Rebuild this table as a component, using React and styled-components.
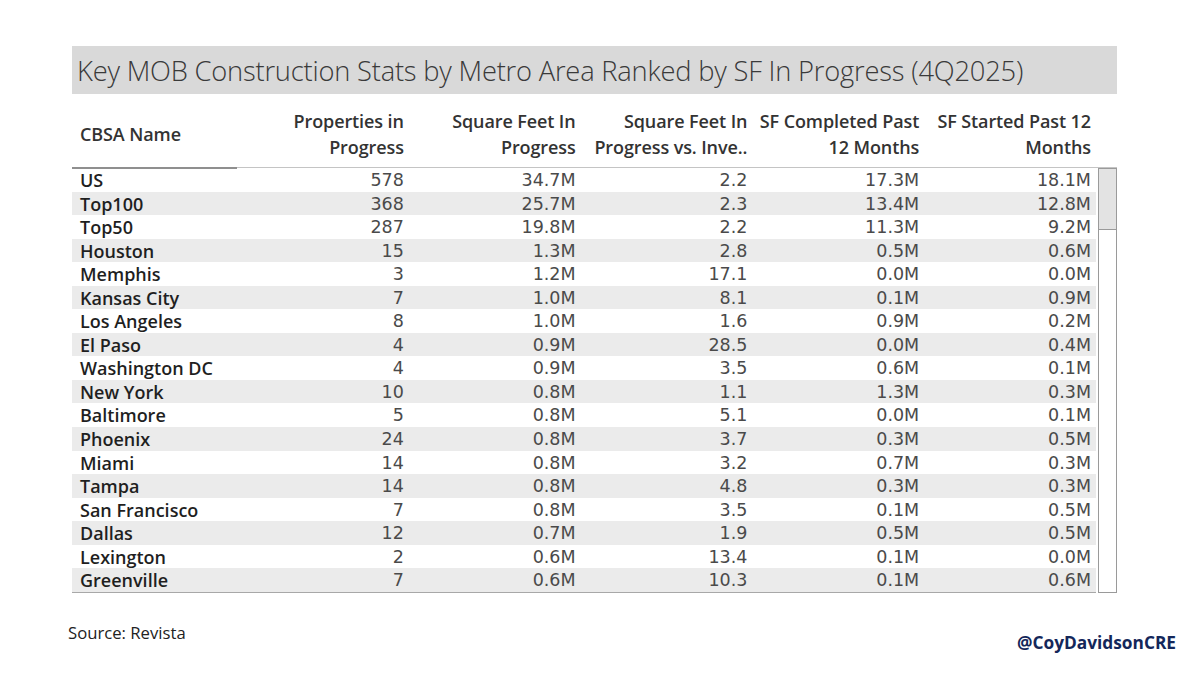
import styled, { createGlobalStyle } from "styled-components";

const GlobalStyle = createGlobalStyle`
  html, body {
    margin: 0;
    padding: 0;
    background: #fff;
  }
  body {
    font-family: "Open Sans", "Noto Sans", sans-serif;
    color: #2b2b2b;
  }
`;

const Page = styled.div`
  width: 1200px;
  height: 675px;
  background: #fff;
  padding: 46px 83px 0 72px;
  box-sizing: border-box;
`;

const TitleBar = styled.div`
  height: 48px;
  background: #d9d9d9;
  display: flex;
  align-items: center;
  padding-left: 5px;
`;

const Title = styled.h1`
  margin: 0;
  font-family: "Open Sans", sans-serif;
  font-weight: 300;
  font-size: 27.3px;
  color: #3a3a3a;
  letter-spacing: -0.2px;
  white-space: nowrap;
`;

const Table = styled.div`
  margin-top: 6px;
  width: 1045px;
`;

const HeadRow = styled.div`
  display: grid;
  grid-template-columns: 165px repeat(5, 171.8px) 20px;
  height: 67px;
  align-items: center;
`;

const HeadCell = styled.div`
  font-family: "Open Sans", sans-serif;
  font-weight: 600;
  font-size: 18px;
  line-height: 26px;
  color: #333;
  text-align: ${({ $left }) => ($left ? "left" : "right")};
  padding: ${({ $left }) => ($left ? "0 0 0 8px" : "0 5px 0 0")};
  white-space: nowrap;
  letter-spacing: -0.1px;
`;

const Body = styled.div`
  display: grid;
  grid-template-columns: 1024px 21px;
  border-top: 1px solid #c4c4c4;
  position: relative;
`;

const Rows = styled.div`
  border-bottom: 1.5px solid #a8a8a8;
`;

const HeadRule = styled.div`
  position: absolute;
  left: 0;
  top: -1px;
  width: 165px;
  height: 2px;
  background: #8f8f8f;
`;

const Row = styled.div`
  display: grid;
  grid-template-columns: 165px repeat(5, 171.8px);
  height: 23.55px;
  align-items: center;
  background: ${({ $shade }) => ($shade ? "#ebebeb" : "#fff")};
`;

const NameCell = styled.div`
  font-family: "Open Sans", sans-serif;
  font-weight: 600;
  font-size: 18px;
  color: #1f1f1f;
  padding-left: 8px;
  white-space: nowrap;
`;

const NumCell = styled.div`
  font-family: "DejaVu Sans", sans-serif;
  font-weight: 400;
  font-size: 17.5px;
  color: #4a4a4a;
  text-align: right;
  padding-right: 5px;
  white-space: nowrap;
`;

const Scroll = styled.div`
  border: 1.5px solid #9a9a9a;
  margin-left: 2px;
  background: #fff;
  box-sizing: border-box;
  height: 100%;
`;

const Thumb = styled.div`
  height: 60px;
  background: #e3e3e3;
  border-bottom: 1.5px solid #9a9a9a;
`;

const Footer = styled.div`
  display: flex;
  justify-content: space-between;
  align-items: flex-start;
  margin: 28px -59px 0 -4px;
`;

const Source = styled.div`
  font-family: "Open Sans", sans-serif;
  font-size: 16.7px;
  color: #222;
`;

const Handle = styled.div`
  font-family: "Open Sans", sans-serif;
  font-weight: 700;
  font-size: 17.3px;
  color: #14275a;
  margin-top: 10px;
`;

const headers = [
  ["Properties in", "Progress"],
  ["Square Feet In", "Progress"],
  ["Square Feet In", "Progress vs. Inve.."],
  ["SF Completed Past", "12 Months"],
  ["SF Started Past 12", "Months"],
];

const data = [
  ["US", "578", "34.7M", "2.2", "17.3M", "18.1M"],
  ["Top100", "368", "25.7M", "2.3", "13.4M", "12.8M"],
  ["Top50", "287", "19.8M", "2.2", "11.3M", "9.2M"],
  ["Houston", "15", "1.3M", "2.8", "0.5M", "0.6M"],
  ["Memphis", "3", "1.2M", "17.1", "0.0M", "0.0M"],
  ["Kansas City", "7", "1.0M", "8.1", "0.1M", "0.9M"],
  ["Los Angeles", "8", "1.0M", "1.6", "0.9M", "0.2M"],
  ["El Paso", "4", "0.9M", "28.5", "0.0M", "0.4M"],
  ["Washington DC", "4", "0.9M", "3.5", "0.6M", "0.1M"],
  ["New York", "10", "0.8M", "1.1", "1.3M", "0.3M"],
  ["Baltimore", "5", "0.8M", "5.1", "0.0M", "0.1M"],
  ["Phoenix", "24", "0.8M", "3.7", "0.3M", "0.5M"],
  ["Miami", "14", "0.8M", "3.2", "0.7M", "0.3M"],
  ["Tampa", "14", "0.8M", "4.8", "0.3M", "0.3M"],
  ["San Francisco", "7", "0.8M", "3.5", "0.1M", "0.5M"],
  ["Dallas", "12", "0.7M", "1.9", "0.5M", "0.5M"],
  ["Lexington", "2", "0.6M", "13.4", "0.1M", "0.0M"],
  ["Greenville", "7", "0.6M", "10.3", "0.1M", "0.6M"],
];

export default function App() {
  return (
    <>
      <GlobalStyle />
      <Page>
        <TitleBar>
          <Title>Key MOB Construction Stats by Metro Area Ranked by SF In Progress (4Q2025)</Title>
        </TitleBar>

        <Table>
          <HeadRow>
            <HeadCell $left>CBSA Name</HeadCell>
            {headers.map((h, i) => (
              <HeadCell key={i}>
                {h[0]}
                <br />
                {h[1]}
              </HeadCell>
            ))}
          </HeadRow>

          <Body>
            <HeadRule />
            <Rows>
              {data.map((r, i) => (
                <Row key={r[0]} $shade={i % 2 === 1}>
                  <NameCell>{r[0]}</NameCell>
                  {r.slice(1).map((v, j) => (
                    <NumCell key={j}>{v}</NumCell>
                  ))}
                </Row>
              ))}
            </Rows>
            <Scroll>
              <Thumb />
            </Scroll>
          </Body>
        </Table>

        <Footer>
          <Source>Source: Revista</Source>
          <Handle>@CoyDavidsonCRE</Handle>
        </Footer>
      </Page>
    </>
  );
}
